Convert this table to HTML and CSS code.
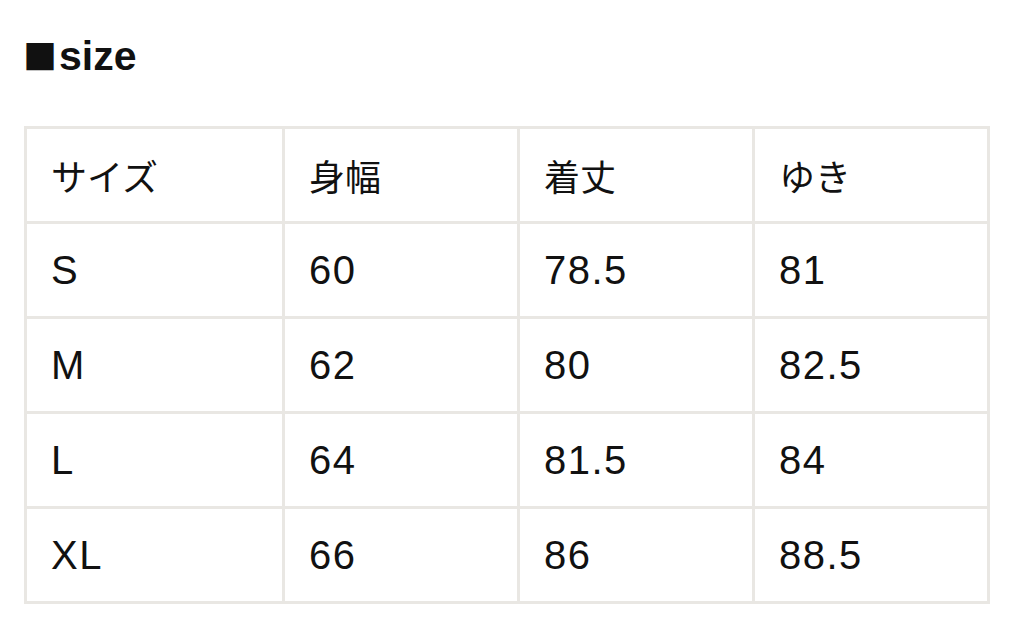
FILE: index.html
```html
<!DOCTYPE html>
<html lang="ja">
<head>
<meta charset="utf-8">
<link rel="stylesheet" href="styles.css">
</head>
<body>
<div class="page">
  <h2 class="title"><span class="mark">■</span>size</h2>
  <table class="size-table">
    <colgroup>
      <col class="c1"><col class="c2"><col class="c3"><col class="c4">
    </colgroup>
    <tr class="head"><td>サイズ</td><td>身幅</td><td>着丈</td><td>ゆき</td></tr>
    <tr><td>S</td><td>60</td><td>78.5</td><td>81</td></tr>
    <tr><td>M</td><td>62</td><td>80</td><td>82.5</td></tr>
    <tr><td>L</td><td>64</td><td>81.5</td><td>84</td></tr>
    <tr><td>XL</td><td>66</td><td>86</td><td>88.5</td></tr>
  </table>
</div>
</body>
</html>
```

FILE: styles.css
```css
html, body {
  margin: 0;
  padding: 0;
  background: #ffffff;
}
body {
  font-family: "Liberation Sans", "Noto Sans CJK JP", sans-serif;
  color: #111;
}
.page {
  padding: 32px 0 0 24px;
}
.title {
  margin: 0 0 0 -1px;
  font-size: 41px;
  font-weight: bold;
  line-height: 48px;
  color: #111;
}
.mark {
  font-family: "Noto Sans CJK JP", sans-serif;
  font-size: 34px;
  font-weight: normal;
  margin-right: 2px;
}
.size-table {
  margin-top: 46px;
  border-collapse: collapse;
  width: 966px;
  table-layout: fixed;
}
.c1 { width: 258px; }
.c2, .c3, .c4 { width: 235px; }
.size-table td {
  border: 3px solid #e9e7e3;
  height: 92px;
  padding: 0 0 0 24px;
  font-size: 40px;
  letter-spacing: 1.5px;
  font-family: "Liberation Sans", "Noto Sans CJK JP", sans-serif;
  vertical-align: middle;
  color: #111;
}
.size-table .head td {
  font-family: "Noto Sans CJK JP", sans-serif;
  font-size: 36px;
  letter-spacing: 0;
}
```
